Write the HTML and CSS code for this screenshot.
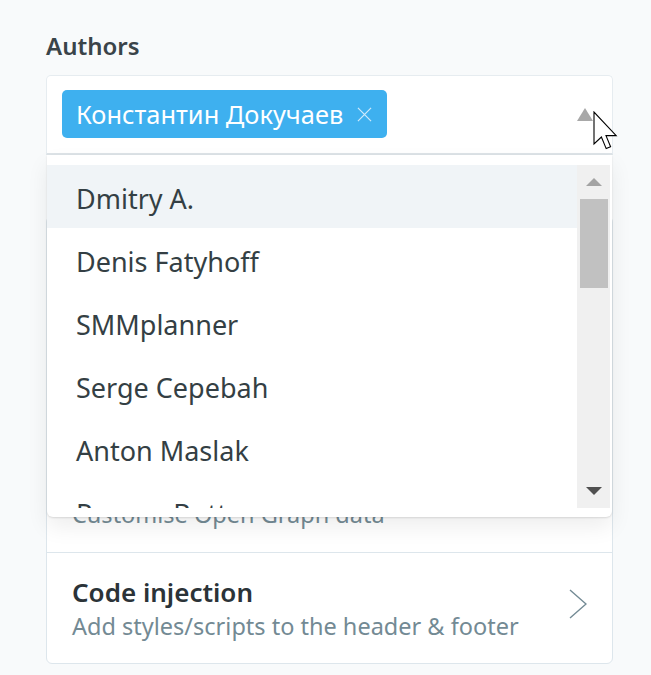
FILE: index.html
```html
<!DOCTYPE html>
<html lang="en">
<head>
<meta charset="utf-8">
<title>Authors</title>
<link rel="stylesheet" href="styles.css">
</head>
<body>
<div class="page">
  <div class="field">
    <label class="label">Authors</label>
    <div class="select">
      <div class="select-box">
        <span class="tag">Константин Докучаев<svg class="tag-x" width="16" height="16" viewBox="0 0 16 16"><path d="M1 1 L15 15 M15 1 L1 15" stroke="currentColor" stroke-width="1.3" fill="none"/></svg></span>
        <svg class="caret" width="16" height="13" viewBox="0 0 16 13"><path d="M8 0 L16 13 L0 13 Z" fill="#a8a8a8"/></svg>
      </div>
      <div class="dropdown">
        <ul class="options">
          <li class="opt active">Dmitry A.</li>
          <li class="opt">Denis Fatyhoff</li>
          <li class="opt">SMMplanner</li>
          <li class="opt">Serge Cepebah</li>
          <li class="opt">Anton Maslak</li>
          <li class="opt">Roman Butt</li>
        </ul>
        <div class="scrollbar">
          <div class="sb-btn"><svg width="16" height="8" viewBox="0 0 16 8"><path d="M8 0 L16 8 L0 8 Z" fill="#a3a3a3"/></svg></div>
          <div class="sb-track"><div class="sb-thumb"></div></div>
          <div class="sb-btn"><svg width="16" height="8" viewBox="0 0 16 8"><path d="M0 0 L16 0 L8 8 Z" fill="#505050"/></svg></div>
        </div>
      </div>
      <svg class="cursor" width="26" height="40" viewBox="0 0 13 20"><path d="M0.5 0.5 L0.5 16.5 L4.2 13 L6.6 18.8 L8.8 17.9 L6.5 12.3 L11.6 12.3 Z" fill="#fff" stroke="#000" stroke-width="0.55" stroke-linejoin="miter"/></svg>
    </div>
  </div>

  <div class="card">
    <div class="row">
      <div class="row-text">
        <div class="row-title">Meta data</div>
        <div class="row-desc">Extra content for search engines</div>
      </div>
      <svg class="chev" width="18" height="30" viewBox="0 0 18 30"><path d="M1 1 L17 15 L1 29" stroke="#738a94" stroke-width="1.4" fill="none"/></svg>
    </div>
    <div class="row">
      <div class="row-text">
        <div class="row-title">Twitter card</div>
        <div class="row-desc">Customise structured data for Twitter</div>
      </div>
      <svg class="chev" width="18" height="30" viewBox="0 0 18 30"><path d="M1 1 L17 15 L1 29" stroke="#738a94" stroke-width="1.4" fill="none"/></svg>
    </div>
    <div class="row">
      <div class="row-text">
        <div class="row-title">Facebook card</div>
        <div class="row-desc">Customise Open Graph data</div>
      </div>
      <svg class="chev" width="18" height="30" viewBox="0 0 18 30"><path d="M1 1 L17 15 L1 29" stroke="#738a94" stroke-width="1.4" fill="none"/></svg>
    </div>
    <div class="row">
      <div class="row-text">
        <div class="row-title">Code injection</div>
        <div class="row-desc">Add styles/scripts to the header &amp; footer</div>
      </div>
      <svg class="chev" width="18" height="30" viewBox="0 0 18 30"><path d="M1 1 L17 15 L1 29" stroke="#738a94" stroke-width="1.4" fill="none"/></svg>
    </div>
  </div>
</div>
</body>
</html>
```

FILE: styles.css
```css
* { box-sizing: border-box; }
html, body { margin: 0; padding: 0; }
body {
  background: #f8fafb;
  font-family: "Noto Sans", "Open Sans", sans-serif;
  color: #343f44;
  width: 651px;
  height: 675px;
  overflow: hidden;
}
.page {
  padding: 30px 38px 0 46px;
}
.field {
  display: flex;
  flex-direction: column;
}
.label {
  font-size: 24px;
  font-weight: 600;
  line-height: 32px;
  color: #3a4449;
  margin-bottom: 13px;
}
.select {
  position: relative;
}
.select-box {
  height: 80px;
  background: #fff;
  border: 1px solid #e6ecf0;
  border-bottom: 2px solid #dde3e7;
  border-radius: 5px 5px 0 0;
  padding: 14px 19px 0 15px;
  display: flex;
  align-items: flex-start;
  justify-content: space-between;
}
.tag {
  display: inline-flex;
  align-items: center;
  height: 48px;
  background: #3eb0ef;
  color: #fff;
  border-radius: 5px;
  padding: 0 15px 0 14px;
  font-size: 25.4px;
  gap: 14px;
}
.tag-x {
  color: #cfeafb;
  width: 15px;
  height: 15px;
}
.caret {
  margin-top: 18px;
}
.dropdown {
  position: absolute;
  top: 80px;
  left: 1px;
  right: 1px;
  height: 362px;
  background: #fff;
  border-radius: 0 0 6px 6px;
  box-shadow: 0 10px 22px rgba(0, 0, 0, 0.07), 0 1px 2px rgba(0, 0, 0, 0.12);
  padding: 10px 2px 9px 0;
  display: flex;
  overflow: hidden;
}
.options {
  list-style: none;
  margin: 0;
  padding: 0;
  flex: 1;
  overflow: hidden;
}
.opt {
  height: 63px;
  display: flex;
  align-items: center;
  padding-left: 29px;
  padding-top: 3px;
  font-size: 27px;
  color: #343f44;
}
.opt.active {
  background: #f0f4f7;
}
.scrollbar {
  width: 33px;
  background: #f0f0f0;
  display: flex;
  flex-direction: column;
}
.sb-btn {
  height: 34px;
  display: flex;
  align-items: center;
  justify-content: center;
}
.sb-track {
  flex: 1;
  padding: 0 2px 0 3px;
}
.sb-thumb {
  height: 89px;
  background: #c1c1c1;
}
.cursor {
  position: absolute;
  left: 547px;
  top: 36px;
}
.card {
  margin-top: 61px;
  background: #fff;
  border: 1px solid #dde6ec;
  border-radius: 6px;
}
.row {
  height: 112px;
  display: flex;
  align-items: center;
  justify-content: space-between;
  padding: 0 25px 0 25px;
  border-top: 1px solid #dde6ec;
}
.row:first-child {
  border-top: 0;
  height: 111px;
}
.row:last-child {
  height: 111px;
}
.row-title {
  font-size: 26px;
  font-weight: 600;
  line-height: 34px;
  color: #2b3338;
}
.row-desc {
  font-size: 23.5px;
  line-height: 32px;
  color: #738a94;
  margin-top: 1px;
}
.chev {
  margin-top: -8px;
}
```
